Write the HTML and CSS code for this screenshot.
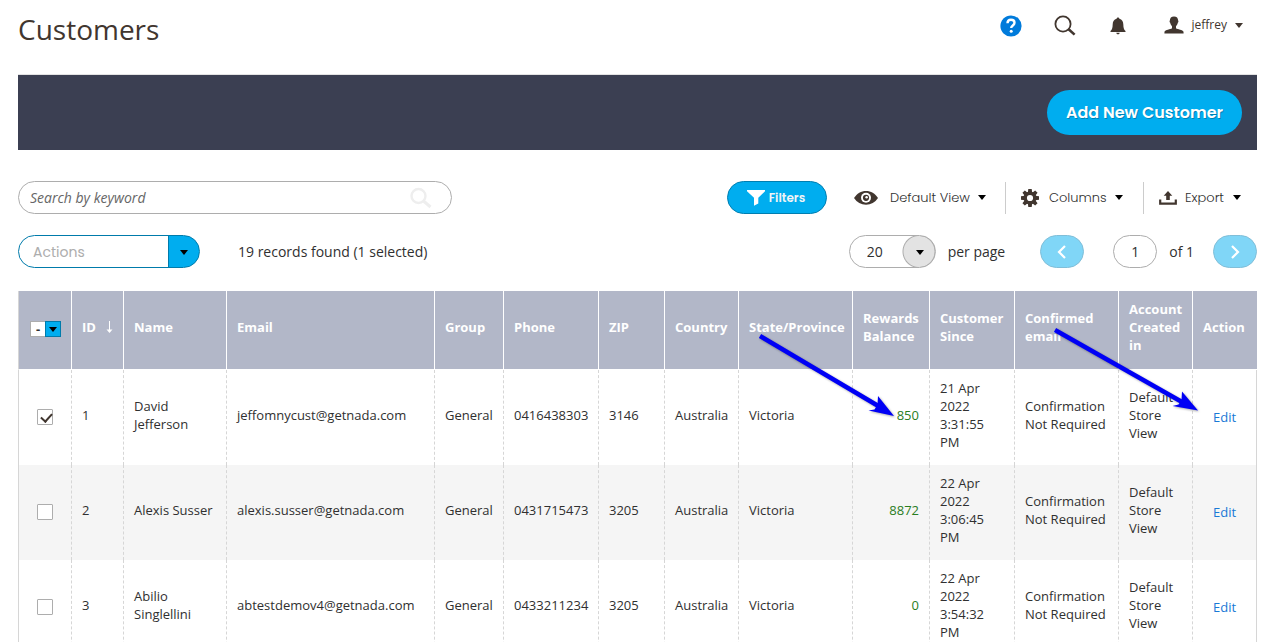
FILE: index.html
```html
<!DOCTYPE html>
<html lang="en">
<head>
<meta charset="utf-8">
<title>Customers</title>
<link rel="stylesheet" href="styles.css">
</head>
<body>
<div class="page">
  <header class="page-header">
    <h1 class="page-title">Customers</h1>
    <nav class="header-tools" aria-label="Account tools">
      <a class="tool tool-help" href="#help" aria-label="Help">
        <svg width="22" height="22" viewBox="0 0 22 22"><circle cx="11" cy="11" r="10.6" fill="#007bdb"/><path d="M7.500 8.300c0-2.200 1.500-3.500 3.500-3.500s3.500 1.300 3.500 3c0 2.700-3.300 2.600-3.300 5.200" fill="none" stroke="#fff" stroke-width="2.400"/><circle cx="11.200" cy="16.200" r="1.500" fill="#fff"/></svg>
      </a>
      <button class="tool tool-search" type="button" aria-label="Search">
        <svg width="22" height="22" viewBox="0 0 22 22"><circle cx="9" cy="9" r="7.6" fill="none" stroke="#41362f" stroke-width="1.8"/><path d="M14.6 14.2l6 5.4" stroke="#41362f" stroke-width="2.6"/></svg>
      </button>
      <button class="tool tool-bell" type="button" aria-label="Notifications">
        <svg width="16" height="18" viewBox="0 0 16 18"><path d="M8 .5c.9 0 1.3.6 1.4 1.3 2.6.7 3.8 2.8 3.9 5.4.1 3.6.6 5.6 2.2 6.9v.9H.5v-.9c1.600-1.300 2.100-3.300 2.200-6.900.1-2.600 1.300-4.700 3.900-5.400C6.700 1.100 7.100.5 8 .5z" fill="#41362f"/><path d="M6.300 15.800h3.400c-.2 1-.8 1.500-1.700 1.500s-1.500-.5-1.700-1.500z" fill="#41362f"/></svg>
      </button>
      <button class="tool tool-user" type="button">
        <svg width="20" height="18" viewBox="0 0 20 18"><path d="M10 .4c2.700 0 4.200 1.600 4.100 4.100.5.200.5 1.700-.3 2.300-.4 1.700-1 2.700-1.800 3.500v2c1.500 1.100 6.800 1.600 7.500 3.500l.1 1.800H.4l.1-1.800c.7-1.900 6-2.400 7.500-3.500v-2c-.8-.8-1.400-1.800-1.800-3.500-.8-.6-.8-2.100-.3-2.300C5.800 2 7.300.4 10 .4z" fill="#41362f"/></svg>
        <span>jeffrey</span><i class="caret caret-brown"></i>
      </button>
    </nav>
  </header>

  <div class="action-bar">
    <button class="btn-primary" type="button">Add New Customer</button>
  </div>

  <main>
    <div class="toolbar toolbar-top">
      <form class="search" role="search">
        <input class="search-input" type="text" placeholder="Search by keyword" aria-label="Search by keyword">
        <button class="search-submit" type="button" aria-label="Search">
          <svg width="22" height="22" viewBox="0 0 22 22"><circle cx="8.500" cy="9" r="7" fill="none" stroke="#eee" stroke-width="2.400"/><path d="M13.500 14l7 6" stroke="#eee" stroke-width="3"/></svg>
        </button>
      </form>
      <div class="grid-controls">
        <button class="btn-filters" type="button">
          <svg width="18" height="16" viewBox="0 0 18 16"><path d="M0 0h18v1.300l-6.700 6.400v5.800L7 15.800V7.700L0 1.300z" fill="#fff"/></svg>
          Filters
        </button>
        <button class="control control-view" type="button">
          <svg width="24" height="14" viewBox="0 0 24 14"><path d="M0 7C3 2.500 7 0 12 0s9 2.500 12 7c-3 4.500-7 6.700-12 6.700S3 11.500 0 7z" fill="#41362f"/><circle cx="12" cy="6.800" r="5" fill="#fff"/><circle cx="12" cy="6.800" r="3.100" fill="#41362f"/><circle cx="12.600" cy="6.300" r="1.200" fill="#fff"/></svg>
          <span>Default View</span><i class="caret"></i>
        </button>
        <button class="control control-columns" type="button">
          <svg width="18" height="18" viewBox="0 0 18 18"><g fill="#41362f"><path d="M7.300 0h3.400l.5 4H6.800zM7.300 18h3.400l.5-4H6.800zM0 7.300v3.400l4 .5V6.800zM18 7.300v3.400l-4 .5V6.800z"/><path d="M7.300 0h3.400l.5 4H6.800zM7.300 18h3.400l.5-4H6.800zM0 7.300v3.400l4 .5V6.800zM18 7.300v3.400l-4 .5V6.800z" transform="rotate(45 9 9)"/></g><circle cx="9" cy="9" r="4.800" fill="none" stroke="#41362f" stroke-width="3.400"/></svg>
          <span>Columns</span><i class="caret"></i>
        </button>
        <button class="control control-export" type="button">
          <svg width="18" height="14" viewBox="0 0 18 14"><path d="M9 0l4.300 4.700h-2.500v4.200H7.200V4.700H4.700z" fill="#41362f"/><path d="M1.200 8.500v4.200h15.600V8.500" fill="none" stroke="#41362f" stroke-width="2.200"/></svg>
          <span>Export</span><i class="caret"></i>
        </button>
      </div>
    </div>

    <div class="toolbar toolbar-bottom">
      <div class="mass-actions">
        <div class="select-wrap">
          <select class="actions-select" aria-label="Actions"><option>Actions</option></select>
          <i class="caret"></i>
        </div>
        <span class="records">19 records found (1 selected)</span>
      </div>
      <div class="pager">
        <div class="select-wrap">
          <select class="size-select" id="page-size"><option>20</option></select>
          <i class="caret"></i>
        </div>
        <label class="size-label" for="page-size">per page</label>
        <button class="page-btn" type="button" aria-label="Previous page"><svg width="10" height="14" viewBox="0 0 10 14"><path d="M8 1L2 7l6 6" fill="none" stroke="#fff" stroke-width="2.200"/></svg></button>
        <input class="page-input" id="page-no" type="text" value="1">
        <label class="page-total" for="page-no">of 1</label>
        <button class="page-btn" type="button" aria-label="Next page"><svg width="10" height="14" viewBox="0 0 10 14"><path d="M2 1l6 6-6 6" fill="none" stroke="#fff" stroke-width="2.200"/></svg></button>
      </div>
    </div>

    <div class="grid-wrap">
      <table class="grid">
        <colgroup>
          <col class="c-check"><col class="c-id"><col class="c-name"><col class="c-email"><col class="c-group"><col class="c-phone"><col class="c-zip"><col class="c-country"><col class="c-state"><col class="c-rewards"><col class="c-since"><col class="c-confirmed"><col class="c-account"><col class="c-action">
        </colgroup>
        <thead>
          <tr>
            <th><button class="multicheck" type="button" aria-label="Select rows"><span class="multicheck-box">-</span><span class="multicheck-arrow"><i class="caret"></i></span></button></th>
            <th><span class="sorted">ID <svg width="7" height="13" viewBox="0 0 7 13"><path d="M3.500 0v10" stroke="#fff" stroke-width="1"/><path d="M.5 8.500h6l-3 3.500z" fill="#fff"/></svg></span></th>
            <th>Name</th><th>Email</th><th>Group</th><th>Phone</th><th>ZIP</th><th>Country</th><th>State/Province</th><th>Rewards Balance</th><th>Customer Since</th><th>Confirmed email</th><th>Account Created in</th><th>Action</th>
          </tr>
        </thead>
        <tbody>
          <tr>
            <td class="check"><input type="checkbox" checked aria-label="Select customer 1"></td>
            <td>1</td><td>David Jefferson</td><td>jeffomnycust@getnada.com</td><td>General</td><td>0416438303</td><td>3146</td><td>Australia</td><td>Victoria</td><td class="balance">850</td><td>21 Apr 2022 3:31:55 PM</td><td>Confirmation Not Required</td><td>Default Store View</td><td class="action"><a href="#edit-1">Edit</a></td>
          </tr>
          <tr>
            <td class="check"><input type="checkbox" aria-label="Select customer 2"></td>
            <td>2</td><td>Alexis Susser</td><td>alexis.susser@getnada.com</td><td>General</td><td>0431715473</td><td>3205</td><td>Australia</td><td>Victoria</td><td class="balance">8872</td><td>22 Apr 2022 3:06:45 PM</td><td>Confirmation Not Required</td><td>Default Store View</td><td class="action"><a href="#edit-2">Edit</a></td>
          </tr>
          <tr>
            <td class="check"><input type="checkbox" aria-label="Select customer 3"></td>
            <td>3</td><td>Abilio Singlellini</td><td>abtestdemov4@getnada.com</td><td>General</td><td>0433211234</td><td>3205</td><td>Australia</td><td>Victoria</td><td class="balance">0</td><td>22 Apr 2022 3:54:32 PM</td><td>Confirmation Not Required</td><td>Default Store View</td><td class="action"><a href="#edit-3">Edit</a></td>
          </tr>
        </tbody>
      </table>
      <svg class="callouts" viewBox="0 0 1239 130" preserveAspectRatio="none" aria-hidden="true">
        <path d="M742 45L862 116M1037 39L1164 111" fill="none" stroke="#0000f5" stroke-width="4.500"/>
        <path d="M876 125L860 105l-.5 8.500-3 5-6 1zM1180 119.500L1164 100.500l-.5 8.500-3 4.500-6 1.500z" fill="#0000f5"/>
      </svg>
    </div>
  </main>
</div>
</body>
</html>
```

FILE: styles.css
```css
* { box-sizing: border-box; }

body {
  margin: 0;
  background: #fff;
  color: #303030;
  font: 400 13px/18px "Open Sans", "Noto Sans", sans-serif;
  overflow-x: hidden;
}

button, input, select { font: inherit; color: inherit; margin: 0; }
button { background: none; border: 0; padding: 0; cursor: pointer; }
svg { display: block; flex: none; }

.page { padding: 0 17px 0 18px; height: 100vh; overflow: hidden; }

.page-header {
  display: flex;
  justify-content: space-between;
  align-items: flex-start;
  height: 75px;
  border-bottom: 1px solid #e3e3e3;
}
.page-title {
  margin: 0;
  padding-top: 11px;
  font-size: 28px;
  line-height: 36px;
  font-weight: 400;
  color: #41362f;
}
.header-tools { display: flex; align-items: center; height: 52px; padding-right: 14px; }
.tool { display: flex; align-items: center; color: #41362f; }
.tool-search { margin-left: 32px; }
.tool-bell { margin-left: 34px; }
.tool-user { margin-left: 38px; padding-bottom: 2px; font-size: 12px; }
.tool-user span { margin: 0 8px; }

.caret {
  flex: none;
  width: 0;
  height: 0;
  border: 4px solid transparent;
  border-top: 5px solid #000;
  border-bottom: 0;
}
.caret-brown { border-top-color: #41362f; }

.action-bar {
  display: flex;
  justify-content: flex-end;
  align-items: center;
  height: 75px;
  padding-right: 15px;
  background: #3b3f52;
}
.btn-primary {
  height: 45px;
  padding: 0 19px;
  border-radius: 23px;
  background: #00adef;
  color: #fff;
  font: 600 16px/24px Poppins, Inter, sans-serif;
  text-shadow: 1px 1px 0 rgba(0, 0, 0, .25);
}

.toolbar { display: flex; justify-content: space-between; align-items: center; }
.toolbar-top { margin-top: 31px; height: 33px; }
.toolbar-bottom { margin-top: 21px; height: 33px; }

.search { position: relative; width: 35%; }
.search-input {
  width: 100%;
  height: 33px;
  padding: 0 44px 0 11px;
  border: 1px solid #adadad;
  border-radius: 17px;
  font-size: 14px;
  outline: 0;
}
.search-input::placeholder { color: #666; font-style: italic; opacity: 1; }
.search-submit { position: absolute; right: 20px; top: 6px; }

.grid-controls { display: flex; align-items: center; }
.btn-filters {
  display: flex;
  align-items: center;
  justify-content: center;
  gap: 4px;
  width: 100px;
  height: 33px;
  padding-right: 2px;
  border: 1px solid #007eb0;
  border-radius: 17px;
  background: #00adef;
  color: #f0f4f6;
  font: 600 12px/18px Poppins, Inter, sans-serif;
}
.control {
  display: flex;
  align-items: center;
  height: 32px;
  padding-left: 15px;
  font: 300 13px/18px Poppins, Inter, sans-serif;
  color: #303030;
}
.control span { flex: 1; padding-left: 10px; text-align: left; white-space: nowrap; }
.control-view { width: 178px; padding: 0 19px 0 27px; }
.control-view span { padding-left: 12px; }
.control-columns { width: 138px; padding-right: 20px; border-left: 1px solid #ccc; }
.control-export { width: 114px; padding-right: 16px; border-left: 1px solid #ccc; }
.control-export span { padding-left: 8px; }

.mass-actions, .pager { display: flex; align-items: center; font-size: 14px; }
.select-wrap { position: relative; height: 33px; }
.select-wrap .caret { position: absolute; right: 12px; top: 15px; pointer-events: none; }
.actions-select {
  appearance: none;
  width: 182px;
  height: 33px;
  padding: 0 40px 0 14px;
  border: 1px solid #007bab;
  border-radius: 17px;
  background: linear-gradient(to right, #fff 149px, #007bab 149px, #007bab 150px, #00adef 150px);
  color: #adadad;
  font: 400 14px/18px Poppins, Inter, sans-serif;
}
.records { margin-left: 38px; }
.size-select {
  appearance: none;
  width: 87px;
  height: 33px;
  padding: 0 34px 0 17px;
  border: 1px solid #adadad;
  border-radius: 17px;
  background: radial-gradient(circle at 69px 50%, #e3e3e3 15px, #adadad 16px, transparent 17px);
}
.size-label { margin-left: 12px; margin-right: 35px; }
.page-btn {
  display: flex;
  align-items: center;
  justify-content: center;
  width: 44px;
  height: 33px;
  border: 1px solid #80bed8;
  border-radius: 17px;
  background: #80d6f7;
}
.page-input {
  width: 44px;
  height: 33px;
  margin-left: 29px;
  padding: 0;
  border: 1px solid #adadad;
  border-radius: 17px;
  text-align: center;
}
.page-total { margin-left: 12px; margin-right: 19px; }

.grid-wrap { position: relative; margin-top: 23px; }
.grid {
  width: 100%;
  table-layout: fixed;
  border-collapse: separate;
  border-spacing: 0;
}
.c-check { width: 53px; }
.c-id { width: 52px; }
.c-name { width: 103px; }
.c-email { width: 208px; }
.c-group { width: 69px; }
.c-phone { width: 95px; }
.c-zip { width: 66px; }
.c-country { width: 74px; }
.c-state { width: 114px; }
.c-rewards { width: 77px; }
.c-since { width: 85px; }
.c-confirmed { width: 104px; }
.c-account { width: 74px; }
.c-action { width: 65px; }

.grid th, .grid td { padding: 9px 8px 14px 10px; vertical-align: middle; text-align: left; }
.grid th {
  padding-bottom: 15px;
  background: #b2b7c8;
  border-left: 1px solid #fff;
  border-bottom: 1px solid #fff;
  color: #fff;
  font-weight: 700;
}
.grid th:first-child { padding: 10px 8px 12px 11px; border-left-color: #d6d6d6; }
.grid td { border-left: 1px dashed #d6d6d6; }
.grid td:first-child { border-left-style: solid; }
.grid td:last-child { border-right: 1px solid #d6d6d6; }
.grid tbody tr:nth-child(even) { background: #f5f5f5; }
.grid .balance { padding-right: 10px; text-align: right; color: #2a7d1e; }
.grid .action { padding-left: 20px; padding-top: 13px; }
.action a { color: #1979d6; text-decoration: none; }
.sorted { display: flex; align-items: center; gap: 10px; }

.multicheck { display: flex; width: 31px; height: 16px; border: 1px solid #adadad; background: #fff; color: #303030; line-height: 14px; }
.multicheck-box { flex: 1; text-align: center; }
.multicheck-arrow {
  display: flex;
  align-items: center;
  justify-content: center;
  width: 16px;
  height: 16px;
  margin: -1px -1px 0 0;
  border: 1px solid #007bab;
  background: #00adef;
}

.grid .check { padding: 11px 8px 13px 18px; }
.check input {
  display: block;
  appearance: none;
  width: 16px;
  height: 16px;
  border: 1px solid #adadad;
  border-radius: 1px;
  background: #fff;
}
.check input:checked::after {
  content: "";
  display: block;
  width: 5px;
  height: 9px;
  margin: 1px 0 0 5px;
  border: solid #41362f;
  border-width: 0 2px 2px 0;
  transform: rotate(42deg);
}

.callouts {
  position: absolute;
  left: 0;
  top: 0;
  width: 100%;
  height: 130px;
  pointer-events: none;
  filter: drop-shadow(1px 1px 1px rgba(0, 0, 0, .35));
}
```
